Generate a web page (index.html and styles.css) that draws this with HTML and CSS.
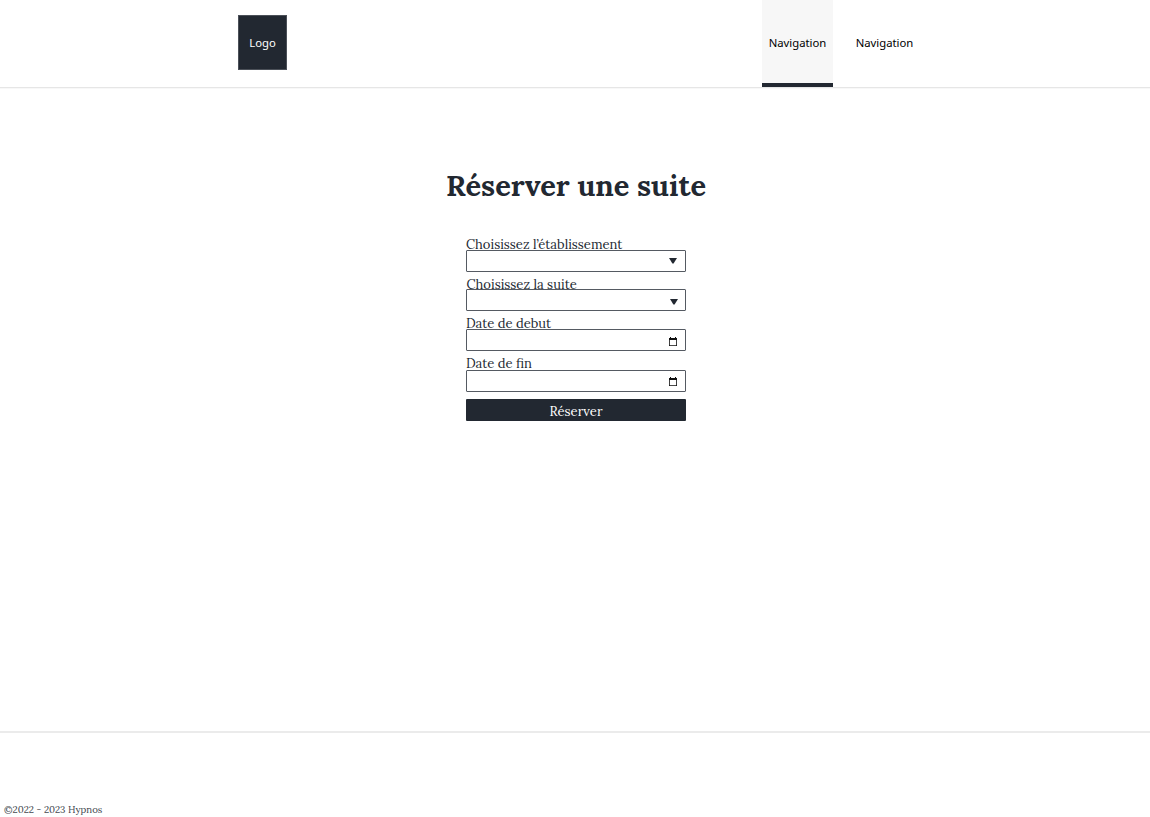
FILE: index.html
```html
<!DOCTYPE html>
<html lang="fr">
<head>
<meta charset="utf-8">
<title>Hypnos</title>
<link rel="stylesheet" href="styles.css">
</head>
<body>
<header class="header">
  <a class="logo">Logo</a>
  <nav class="nav">
    <a class="nav-link active">Navigation</a>
    <a class="nav-link">Navigation</a>
  </nav>
</header>
<main class="main">
  <h1 class="title">Réserver une suite</h1>
  <form class="form">
    <div class="field hotel">
      <label class="label">Choisissez l’établissement</label>
      <div class="box"><svg class="arrow" viewBox="0 0 8 6"><path d="M0 0h8L4.6 5.5h-1.2z"/></svg></div>
    </div>
    <div class="field suite">
      <label class="label">Choisissez la suite</label>
      <div class="box"><svg class="arrow" viewBox="0 0 8 6"><path d="M0 0h8L4.6 5.5h-1.2z"/></svg></div>
    </div>
    <div class="field start">
      <label class="label">Date de debut</label>
      <div class="box"><svg class="calendar" viewBox="0 0 8 9"><path fill-rule="evenodd" d="M0 1h1V0h1v1h4V0h1v1h1v8H0zM.8 3v5.2h6.4V3z"/></svg></div>
    </div>
    <div class="field end">
      <label class="label">Date de fin</label>
      <div class="box"><svg class="calendar" viewBox="0 0 8 9"><path fill-rule="evenodd" d="M0 1h1V0h1v1h4V0h1v1h1v8H0zM.8 3v5.2h6.4V3z"/></svg></div>
    </div>
    <button class="submit" type="button">Réserver</button>
  </form>
</main>
<footer class="footer">©2022 - 2023 Hypnos</footer>
</body>
</html>
```
FILE: styles.css
```css
* { box-sizing: border-box; }
body {
  margin: 0;
  height: 817px;
  display: flex;
  flex-direction: column;
  overflow: hidden;
  background: #fff;
  color: #222831;
  font-family: Lora, "Liberation Serif", serif;
}
.header {
  height: 88px;
  flex: none;
  display: flex;
  justify-content: space-between;
  padding: 0 230px 0 238px;
  border-bottom: 1px solid #e6e6e6;
  box-shadow: 0 1px #f8f8f8;
  font: 11.3px "Noto Sans", sans-serif;
}
.logo {
  width: 49px;
  height: 55px;
  margin-top: 15px;
  background: #222831;
  border: 1px solid #4b5058;
  color: #fff;
  line-height: 54px;
  text-align: center;
}
.nav { display: flex; gap: 16px; }
.nav-link {
  width: 71px;
  height: 87px;
  color: #000;
  line-height: 86px;
  text-align: center;
}
.nav-link.active { background: #f7f7f7; border-bottom: 4px solid #222831; }
.main {
  flex: 1;
  display: flex;
  flex-direction: column;
  align-items: center;
  padding: 78px 0 0 2px;
}
.title {
  margin: 0;
  font-size: 29px;
  line-height: 40px;
}
.form { width: 220px; margin-top: 31px; font-size: 13px; }
.field { height: 40px; }
.field.hotel { height: 39px; }
.field.start { height: 41px; }
.field.end { height: 39px; }
.label { display: block; height: 13px; line-height: 15px; white-space: nowrap; }
.suite .label { line-height: 17px; padding-left: .5px; }
.end .label { line-height: 13px; }
.box {
  height: 22px;
  display: flex;
  align-items: center;
  justify-content: flex-end;
  padding-right: 8px;
  border: 1px solid #555a62;
  border-radius: 1px;
}
.arrow { width: 8px; height: 6px; fill: #222831; }
.suite .arrow { margin-right: -1px; margin-top: 3px; }
.calendar { width: 8px; height: 9px; fill: #111; }
.start .calendar { margin-top: 2px; }
.submit {
  display: block;
  width: 220px;
  height: 22px;
  margin: 3px 0 0;
  padding: 1px 0 0;
  border: 0;
  border-radius: 1px;
  background: #222831;
  color: #fff;
  font: inherit;
  line-height: 23px;
}
.footer {
  height: 86px;
  flex: none;
  padding: 70px 0 0 4px;
  border-top: 2px solid #ebebeb;
  color: #444950;
  font-size: 9.7px;
  line-height: 14px;
}
```
